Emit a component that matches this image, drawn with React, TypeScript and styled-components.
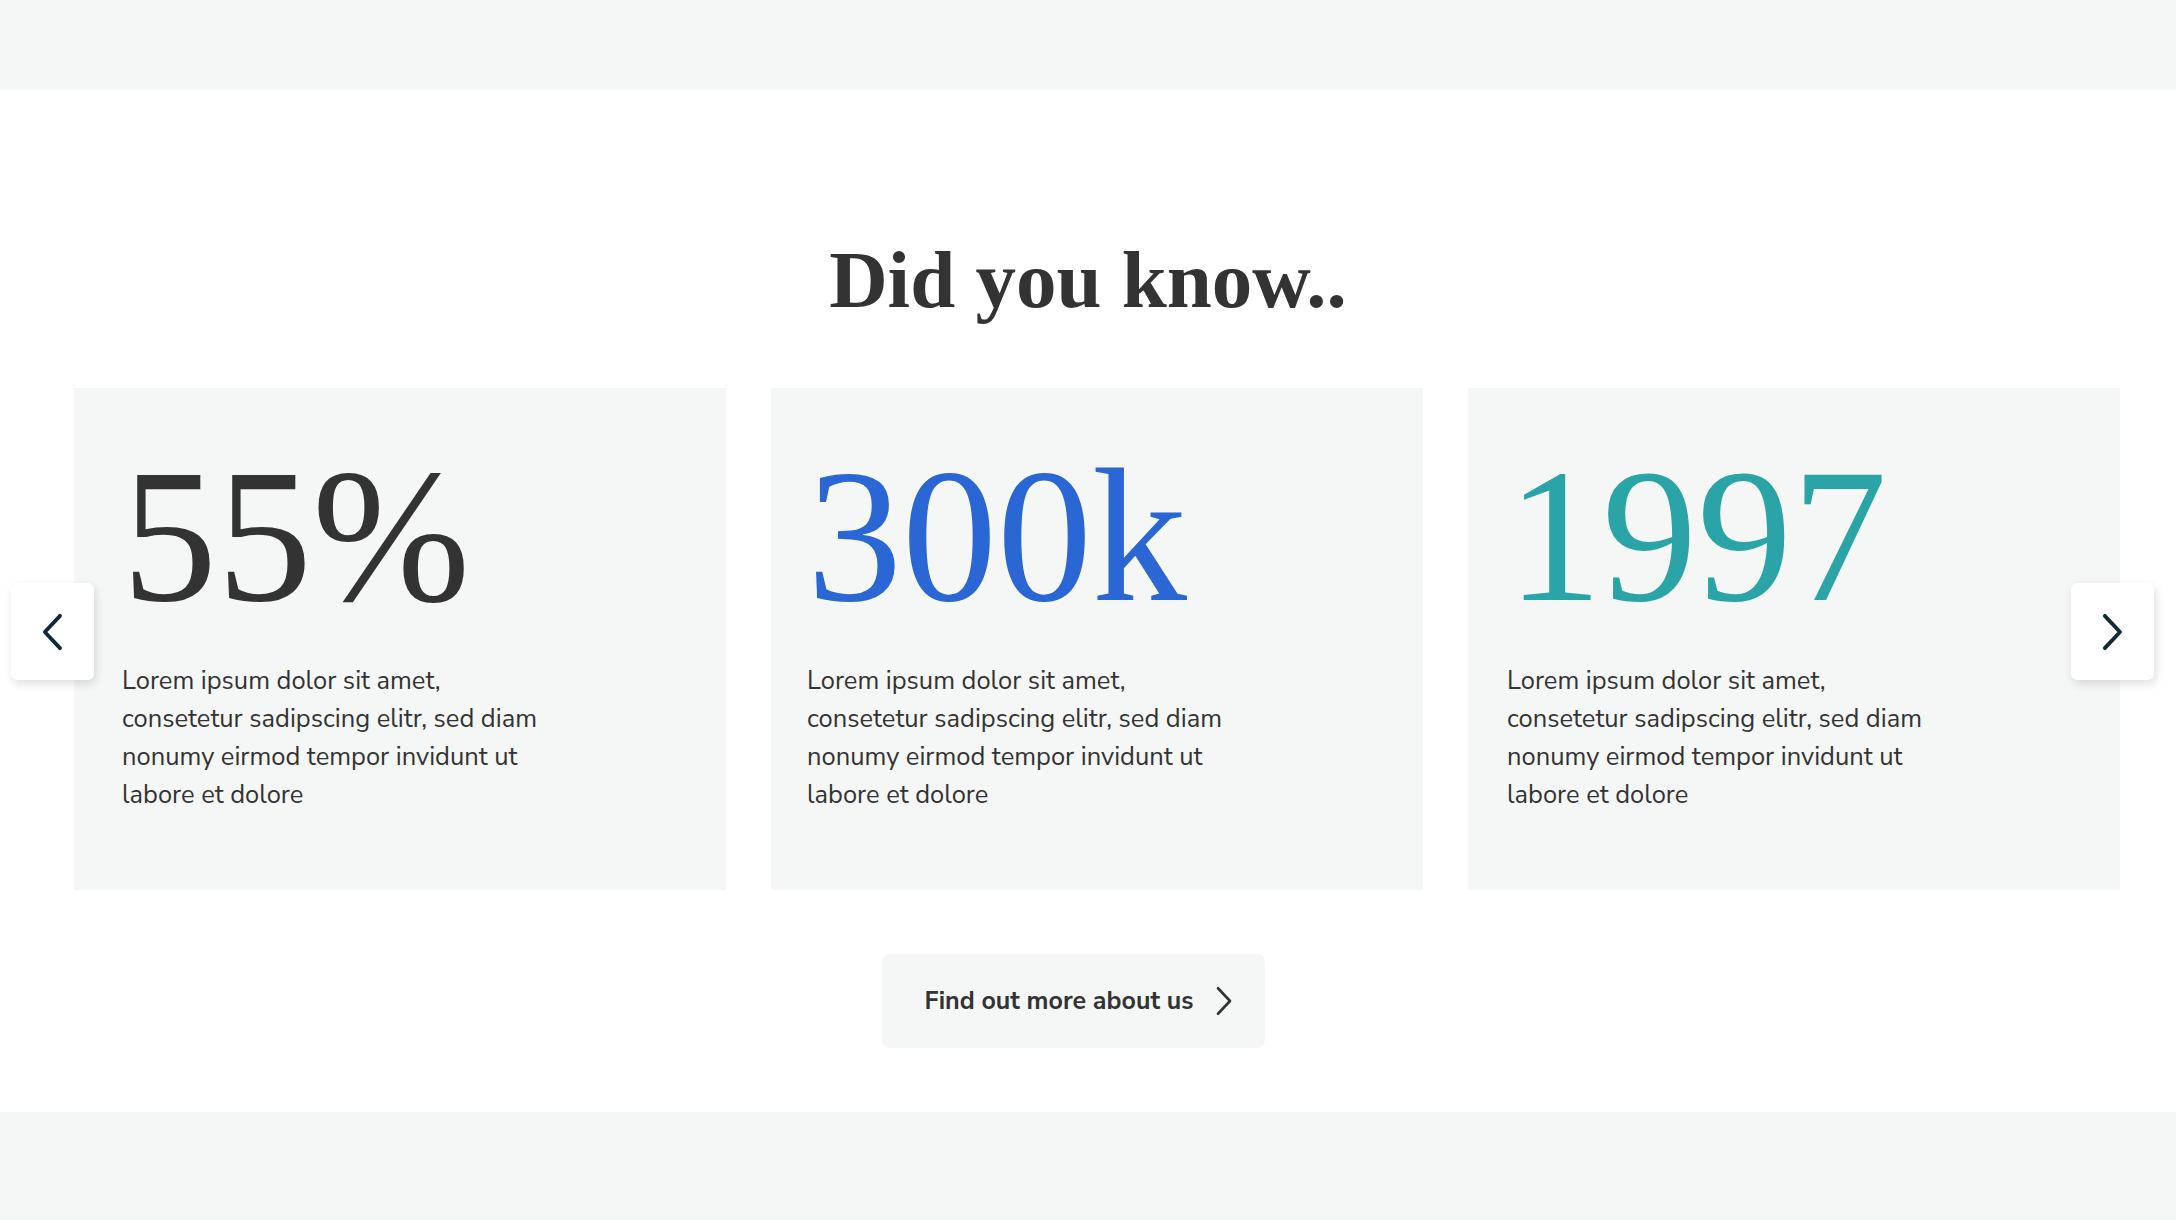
import styled, { createGlobalStyle } from 'styled-components';

const GlobalStyle = createGlobalStyle`
  html, body {
    margin: 0;
    padding: 0;
    background: #ffffff;
  }
  body {
    font-family: 'Nunito Sans', Lato, 'Open Sans', sans-serif;
    color: #333333;
  }
`;

const Band = styled.div<{ $height: number }>`
  height: ${({ $height }) => $height}px;
  background: #f5f7f6;
`;

const Section = styled.section`
  position: relative;
  padding: 148px 0 64px;
  background: #ffffff;
`;

const Heading = styled.h2`
  margin: 0;
  text-align: center;
  font-family: 'Liberation Serif', 'DejaVu Serif', serif;
  font-weight: 700;
  font-size: 81px;
  line-height: 84px;
  color: #333333;
`;

const Track = styled.div`
  display: grid;
  grid-template-columns: repeat(3, 652px);
  column-gap: 45px;
  padding-left: 74px;
  margin-top: 66px;
`;

const Card = styled.article<{ $inset: number }>`
  height: 502px;
  box-sizing: border-box;
  padding: 53px 0 0 ${({ $inset }) => $inset}px;
  background: #f5f7f6;
`;

const Figure = styled.div<{ $color: string }>`
  font-family: 'Liberation Serif', 'DejaVu Serif', serif;
  font-weight: 400;
  font-size: 190px;
  line-height: 190px;
  color: ${({ $color }) => $color};
`;

const Copy = styled.p`
  margin: 31px 0 0;
  font-size: 25.5px;
  line-height: 38px;
  color: #333333;
`;

const Arrow = styled.button<{ $side: 'left' | 'right' }>`
  position: absolute;
  top: 493px;
  ${({ $side }) => ($side === 'left' ? 'left: 11px;' : 'right: 22px;')}
  width: 83px;
  height: 97px;
  border: none;
  border-radius: 6px;
  background: #ffffff;
  box-shadow: 2px 4px 10px rgba(0, 0, 0, 0.13);
  display: flex;
  align-items: center;
  justify-content: center;
  padding: 0;
  cursor: pointer;
`;

const Actions = styled.div`
  display: flex;
  justify-content: center;
  padding-right: 29px;
  margin-top: 64px;
`;

const MoreButton = styled.a`
  display: flex;
  align-items: center;
  gap: 22px;
  height: 94px;
  box-sizing: border-box;
  padding: 0 32px 0 43px;
  border-radius: 8px;
  background: #f5f7f6;
  font-size: 25px;
  font-weight: 700;
  color: #333333;
  text-decoration: none;
`;

const Chevron = ({ dir, size, color, stroke }: { dir: 'left' | 'right'; size: number; color: string; stroke: number }) => (
  <svg width={size * 0.6} height={size} viewBox="0 0 24 40" fill="none">
    <path
      d={dir === 'left' ? 'M20 3 L4 20 L20 37' : 'M4 3 L20 20 L4 37'}
      stroke={color}
      strokeWidth={stroke}
      strokeLinecap="round"
      strokeLinejoin="round"
    />
  </svg>
);

const facts = [
  { value: '55%', color: '#333333', inset: 48 },
  { value: '300k', color: '#2a66d4', inset: 36 },
  { value: '1997', color: '#2aa4a6', inset: 39 },
];

export default function App() {
  return (
    <>
      <GlobalStyle />
      <Band $height={90} />
      <Section>
        <Heading>Did you know..</Heading>
        <Track>
          {facts.map((f) => (
            <Card key={f.value} $inset={f.inset}>
              <Figure $color={f.color}>{f.value}</Figure>
              <Copy>
                Lorem ipsum dolor sit amet,
                <br />
                consetetur sadipscing elitr, sed diam
                <br />
                nonumy eirmod tempor invidunt ut
                <br />
                labore et dolore
              </Copy>
            </Card>
          ))}
        </Track>
        <Arrow $side="left" aria-label="Previous">
          <Chevron dir="left" size={38} color="#0f2a36" stroke={4} />
        </Arrow>
        <Arrow $side="right" aria-label="Next">
          <Chevron dir="right" size={38} color="#0f2a36" stroke={4} />
        </Arrow>
        <Actions>
          <MoreButton href="#">
            Find out more about us
            <Chevron dir="right" size={30} color="#333333" stroke={3.5} />
          </MoreButton>
        </Actions>
      </Section>
      <Band $height={120} />
    </>
  );
}
